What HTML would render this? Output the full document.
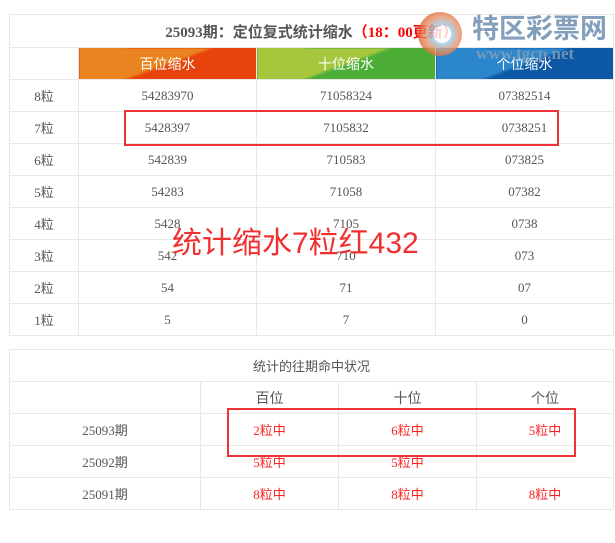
<!DOCTYPE html>
<html><head><meta charset="utf-8"><style>
body{margin:0;width:615px;height:543px;background:#fff;position:relative;overflow:hidden;font-family:"Liberation Serif","Noto Sans CJK SC",serif;color:#555}
table{border-collapse:collapse;position:absolute;left:9px;table-layout:fixed}
td{border:1px solid #e8e8e8;text-align:center;font-size:13px;padding:0}
#t1{top:14px;width:604px}
#t1 td{height:31px}
#t1 .title{height:32px;font-size:15px;font-weight:bold;color:#555}
.h{color:#fff;font-family:"Liberation Sans","Noto Sans CJK SC",sans-serif;font-size:14px}
.o{background:linear-gradient(160deg,#ea8420 0,#ea8420 48%,#e6440c 52%)}
.g{background:linear-gradient(160deg,#a6c63e 0,#a6c63e 48%,#4cae36 52%)}
.b{background:linear-gradient(160deg,#2c86cb 0,#2c86cb 48%,#0c58a6 52%)}
#t2{top:349px;width:604px}
#t2 td{height:31px}
.r{color:#f22;font-family:"Liberation Serif","Noto Sans CJK SC",serif}
.s{font-family:"Liberation Sans","Noto Sans CJK SC",sans-serif;font-size:14px}
.box{position:absolute;border:2.5px solid #ee3338}
</style></head><body>
<table id="t1">
<colgroup><col style="width:69px"><col style="width:178px"><col style="width:179px"><col style="width:178px"></colgroup>
<tr><td class="title" colspan="4">25093期：定位复式统计缩水<span style="color:#f00">（18：00更新）</span></td></tr>
<tr><td></td><td class="h o">百位缩水</td><td class="h g">十位缩水</td><td class="h b">个位缩水</td></tr>
<tr><td>8粒</td><td>54283970</td><td>71058324</td><td>07382514</td></tr>
<tr><td>7粒</td><td>5428397</td><td>7105832</td><td>0738251</td></tr>
<tr><td>6粒</td><td>542839</td><td>710583</td><td>073825</td></tr>
<tr><td>5粒</td><td>54283</td><td>71058</td><td>07382</td></tr>
<tr><td>4粒</td><td>5428</td><td>7105</td><td>0738</td></tr>
<tr><td>3粒</td><td>542</td><td>710</td><td>073</td></tr>
<tr><td>2粒</td><td>54</td><td>71</td><td>07</td></tr>
<tr><td>1粒</td><td>5</td><td>7</td><td>0</td></tr>
</table>
<table id="t2">
<colgroup><col style="width:191px"><col style="width:138px"><col style="width:138px"><col style="width:137px"></colgroup>
<tr><td colspan="4" class="s" style="font-size:13px">统计的往期命中状况</td></tr>
<tr><td></td><td class="s">百位</td><td class="s">十位</td><td class="s">个位</td></tr>
<tr><td>25093期</td><td class="r">2粒中</td><td class="r">6粒中</td><td class="r">5粒中</td></tr>
<tr><td>25092期</td><td class="r">5粒中</td><td class="r">5粒中</td><td></td></tr>
<tr><td>25091期</td><td class="r">8粒中</td><td class="r">8粒中</td><td class="r">8粒中</td></tr>
</table>
<div class="box" style="left:124px;top:110px;width:431px;height:32px"></div>
<div class="box" style="left:227px;top:408px;width:345px;height:45px"></div>
<div style="position:absolute;left:172px;top:218px;font-family:'Liberation Sans','Noto Sans CJK SC',sans-serif;font-size:30px;color:#f03030;white-space:nowrap">统计缩水7粒红432</div>
<div style="position:absolute;left:418px;top:12px;width:44px;height:44px;border-radius:50%;background:radial-gradient(circle at 55% 50%,#fff 0,#fff 25%,#9cc8e8 30%,#e89060 55%,#e0603a 75%,rgba(230,140,90,0.4) 100%);opacity:.8"></div>
<div style="position:absolute;left:472px;top:14px;font-family:'Liberation Sans','Noto Sans CJK SC',sans-serif;font-weight:bold;font-size:27px;line-height:30px;color:#6f8fb0;opacity:.85;white-space:nowrap">特区彩票网</div>
<div style="position:absolute;left:476px;top:44px;font-size:17px;color:#8aa0b8;opacity:.8;font-weight:bold;white-space:nowrap">www.tgcp.net</div>
</body></html>
